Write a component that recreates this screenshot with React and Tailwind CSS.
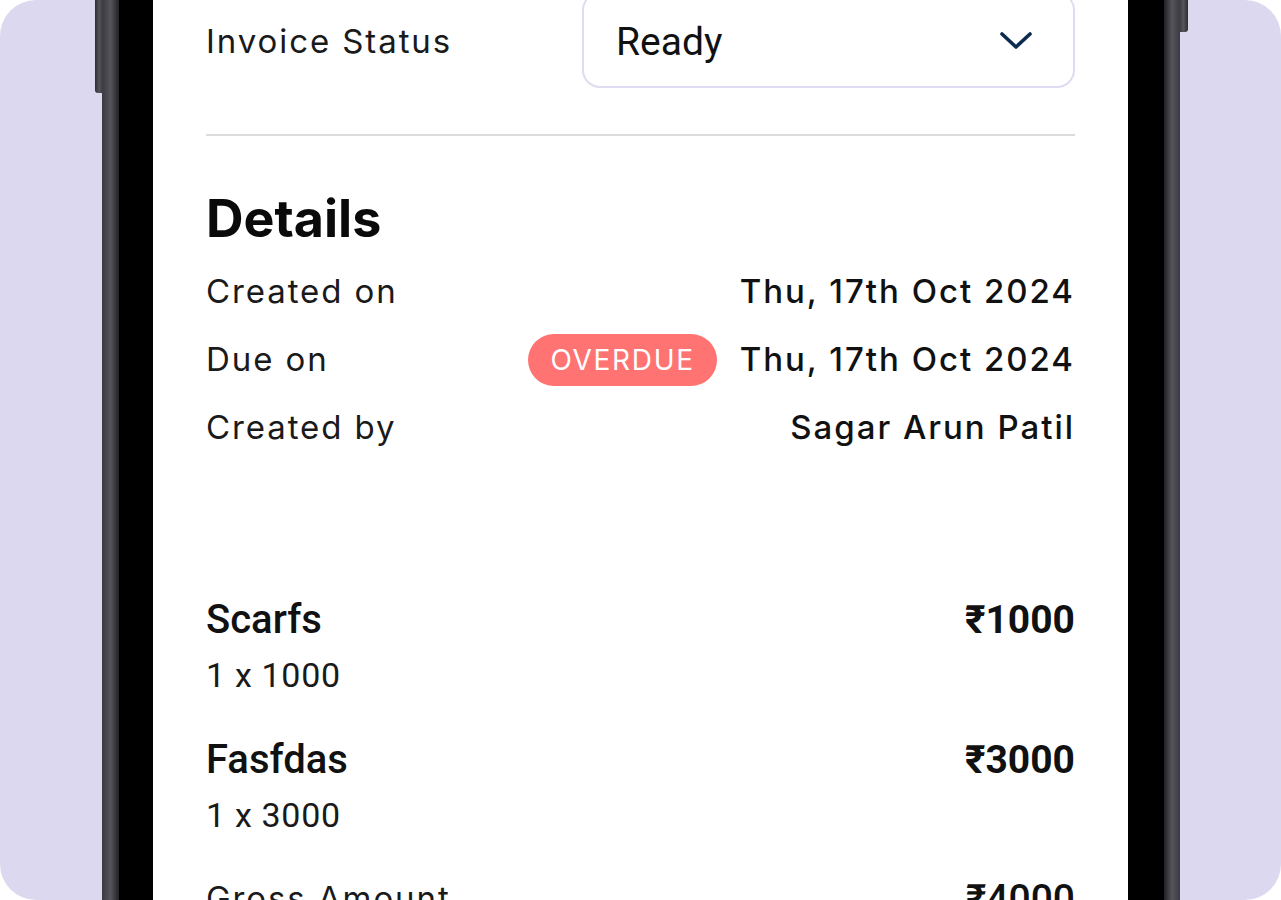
const label = "font-['Inter',sans-serif] text-[33px] tracking-[0.058em] text-[#1a1a1a]";
const value = "font-['Inter',sans-serif] text-[33px] font-medium tracking-[0.06em] text-[#111]";

function DetailRow({ name, children }) {
  return (
    <div className="flex h-[68px] items-center justify-between">
      <span className={label}>{name}</span>
      <div className="flex items-center gap-[23px]">{children}</div>
    </div>
  );
}

function LineItem({ title, qty, amount }) {
  return (
    <div className="flex flex-col">
      <div className="flex h-[50px] items-center justify-between">
        <span className="font-['Roboto',sans-serif] text-[40px] font-medium text-[#111]">{title}</span>
        <span className="font-['Roboto',sans-serif] text-[39px] font-bold text-[#111]">{amount}</span>
      </div>
      <div className="flex h-[60px] items-center">
        <span className="font-['Roboto',sans-serif] text-[34px] tracking-[0.02em] text-[#1a1a1a]">{qty}</span>
      </div>
    </div>
  );
}

export default function App() {
  return (
    <div className="h-[900px] w-[1281px] overflow-hidden bg-white">
      <div className="relative h-full overflow-hidden rounded-[36px] bg-[#dcd8ef]">
        {/* side buttons */}
        <div className="absolute left-[95px] top-0 h-[93px] w-[8px] rounded-bl-[3px] bg-gradient-to-r from-[#2c2c31] via-[#55555b] to-[#3a3a40]" />
        <div className="absolute left-[1179px] top-0 h-[32px] w-[9px] rounded-br-[3px] bg-gradient-to-r from-[#3a3a40] via-[#55555b] to-[#2c2c31]" />

        {/* phone */}
        <div className="ml-[102px] flex h-full w-[1078px]">
          <div className="w-[17px] bg-gradient-to-r from-[#3a3a40] via-[#55555b] to-[#222226]" />
          <div className="w-[34px] bg-black" />

          <div className="w-[975px] bg-white px-[53px]">
            {/* invoice status */}
            <div className="-mt-[8px] flex items-center justify-between">
              <span className={`${label} pt-[4px]`}>Invoice Status</span>
              <div className="flex h-[96px] w-[493px] items-center justify-between rounded-[18px] border-2 border-[#dedbf2] pl-[32px] pr-[40px]">
                <span className="pt-[5px] font-['Roboto',sans-serif] text-[39px] text-[#111]">Ready</span>
                <svg width="34" height="20" viewBox="0 0 34 20" fill="none" className="mt-[1px]">
                  <polyline points="3,3 17,16 31,3" stroke="#0d2b4e" strokeWidth="3.6" strokeLinecap="round" strokeLinejoin="round" />
                </svg>
              </div>
            </div>

            <div className="mt-[46px] h-[2px] bg-[#dcdcdc]" />

            {/* details */}
            <h2 className="mt-[53px] font-['Inter',sans-serif] text-[52px] font-bold leading-[60px] text-[#0a0a0a]">Details</h2>
            <div className="mt-[9px] flex flex-col">
              <DetailRow name="Created on">
                <span className={value}>Thu, 17th Oct 2024</span>
              </DetailRow>
              <DetailRow name="Due on">
                <span className="flex h-[52px] items-center rounded-full bg-[#ff7373] px-[22px] font-['Inter',sans-serif] text-[28px] tracking-[0.06em] text-white">
                  OVERDUE
                </span>
                <span className={value}>Thu, 17th Oct 2024</span>
              </DetailRow>
              <DetailRow name="Created by">
                <span className={value}>Sagar Arun Patil</span>
              </DetailRow>
            </div>

            {/* items */}
            <div className="mt-[133px] flex flex-col gap-[30px]">
              <LineItem title="Scarfs" qty="1 x 1000" amount="₹1000" />
              <LineItem title="Fasfdas" qty="1 x 3000" amount="₹3000" />
            </div>

            <div className="mt-[29px] flex h-[50px] items-center justify-between">
              <span className={label}>Gross Amount</span>
              <span className="font-['Roboto',sans-serif] text-[39px] font-medium text-[#111]">₹4000</span>
            </div>
          </div>

          <div className="w-[36px] bg-black" />
          <div className="w-[16px] bg-gradient-to-r from-[#222226] via-[#55555b] to-[#3a3a40]" />
        </div>
      </div>
    </div>
  );
}
